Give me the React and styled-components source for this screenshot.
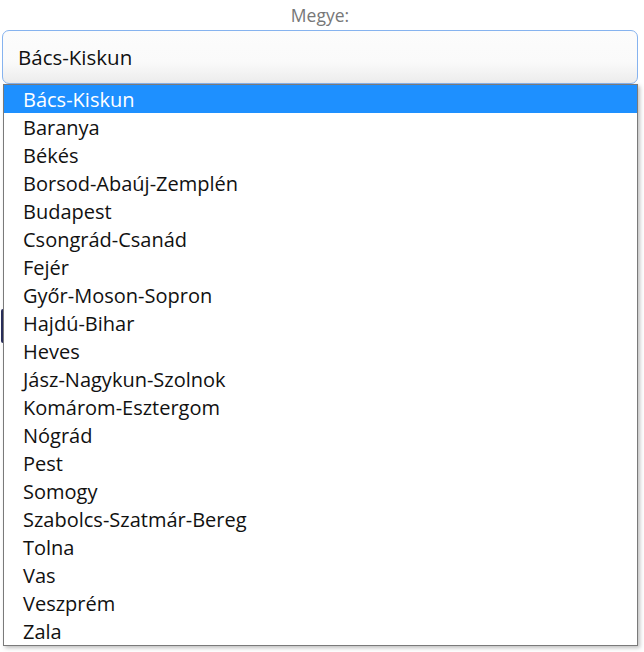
import React from "react";
import styled, { createGlobalStyle } from "styled-components";

const Global = createGlobalStyle`
  html, body {
    margin: 0;
    padding: 0;
    background: #ffffff;
    font-family: "Open Sans", "Noto Sans", sans-serif;
  }
`;

const Page = styled.div`
  position: relative;
  width: 644px;
  height: 652px;
  overflow: hidden;
  background: #ffffff;
`;

const Field = styled.div`
  position: relative;
  margin: 0 6px 0 2px;
  padding-top: 4px;
`;

const Label = styled.div`
  text-align: center;
  color: #777777;
  font-size: 17.5px;
  line-height: 22px;
  height: 26px;
`;

const SelectBox = styled.div`
  height: 52px;
  border: 1px solid #86b3ef;
  border-radius: 7px;
  background: linear-gradient(to bottom, #fcfcfc 0%, #fafafa 60%, #ececec 100%);
  display: flex;
  align-items: center;
  padding-left: 15px;
  font-size: 20.5px;
  color: #111111;
`;

const Behind = styled.div`
  margin: 0 6px 0 1px;
  padding-top: 225px;
`;

const HiddenButton = styled.div`
  width: 120px;
  height: 34px;
  background: #2a2f5c;
  border-radius: 2px;
`;

const List = styled.ul`
  position: absolute;
  top: 84px;
  left: 3px;
  width: 633px;
  margin: 0;
  padding: 0;
  list-style: none;
  background: #ffffff;
  border: 1px solid #7a7a7a;
  box-shadow: 2px 2px 4px rgba(0, 0, 0, 0.25);
`;

const Item = styled.li`
  box-sizing: border-box;
  height: 28px;
  line-height: 28px;
  padding: 1px 0 0 19px;
  font-size: 20px;
  color: ${(p) => (p.$active ? "#ffffff" : "#111111")};
  background: ${(p) => (p.$active ? "#1e90ff" : "transparent")};
`;

const counties = [
  "Bács-Kiskun",
  "Baranya",
  "Békés",
  "Borsod-Abaúj-Zemplén",
  "Budapest",
  "Csongrád-Csanád",
  "Fejér",
  "Győr-Moson-Sopron",
  "Hajdú-Bihar",
  "Heves",
  "Jász-Nagykun-Szolnok",
  "Komárom-Esztergom",
  "Nógrád",
  "Pest",
  "Somogy",
  "Szabolcs-Szatmár-Bereg",
  "Tolna",
  "Vas",
  "Veszprém",
  "Zala",
];

export default function App() {
  return (
    <Page>
      <Global />
      <Field>
        <Label>Megye:</Label>
        <SelectBox>Bács-Kiskun</SelectBox>
      </Field>
      <Behind>
        <HiddenButton />
      </Behind>
      <List>
        {counties.map((c, i) => (
          <Item key={c} $active={i === 0}>
            {c}
          </Item>
        ))}
      </List>
    </Page>
  );
}
